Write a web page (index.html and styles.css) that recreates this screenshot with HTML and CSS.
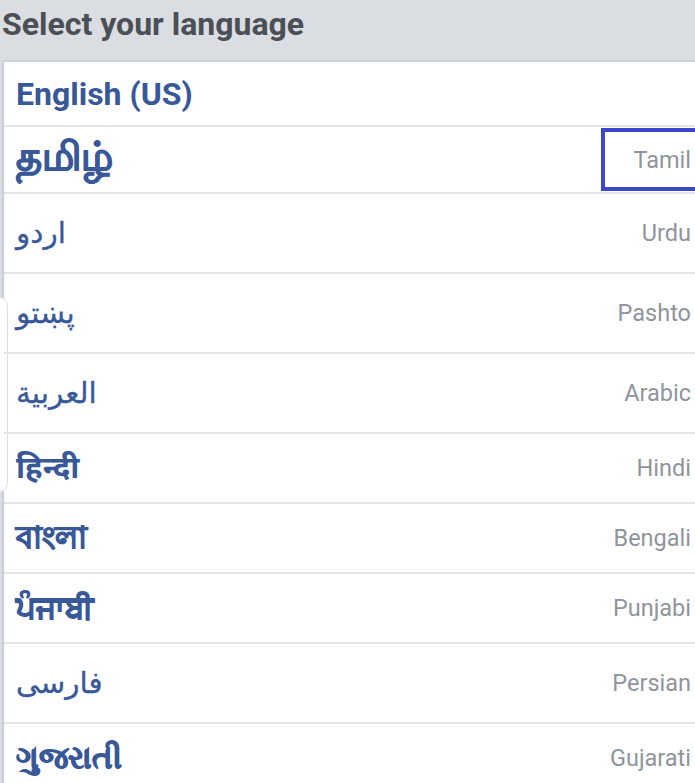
FILE: index.html
```html
<!DOCTYPE html>
<html lang="en">
<head>
<meta charset="utf-8">
<title>Select your language</title>
<link rel="stylesheet" href="styles.css">
</head>
<body>
<div class="page">
  <header class="header">Select your language</header>
  <div class="panel">
    <div class="handle"></div>
    <ul class="list">
      <li class="row row-en"><span class="native bold">English (US)</span></li>
      <li class="row row-ta focused"><span class="native bold stroke tamil">தமிழ்</span><span class="label">Tamil</span></li>
      <li class="row row-ar"><span class="native arabic" dir="rtl">اردو</span><span class="label">Urdu</span></li>
      <li class="row row-ar"><span class="native arabic" dir="rtl">پښتو</span><span class="label">Pashto</span></li>
      <li class="row row-ar"><span class="native arabic" dir="rtl">العربية</span><span class="label">Arabic</span></li>
      <li class="row row-in"><span class="native bold indic">हिन्दी</span><span class="label">Hindi</span></li>
      <li class="row row-in"><span class="native bold stroke indic">বাংলা</span><span class="label">Bengali</span></li>
      <li class="row row-in"><span class="native bold stroke indic">ਪੰਜਾਬੀ</span><span class="label">Punjabi</span></li>
      <li class="row row-ar"><span class="native arabic" dir="rtl">فارسی</span><span class="label">Persian</span></li>
      <li class="row row-in"><span class="native bold stroke indic">ગુજરાતી</span><span class="label">Gujarati</span></li>
    </ul>
  </div>
</div>
</body>
</html>
```
FILE: styles.css
```css
html, body {
  margin: 0;
  padding: 0;
}
body {
  background: #dadde1;
  font-family: Roboto, "Noto Sans", "DejaVu Sans", sans-serif;
  overflow: hidden;
}
.page {
  width: 695px;
  height: 783px;
  overflow: hidden;
}
.header {
  height: 60px;
  box-sizing: border-box;
  padding: 8px 0 0 2px;
  font-size: 32px;
  line-height: 32px;
  font-weight: 700;
  color: #4b4f56;
  background: #dadde1;
}
.panel {
  position: relative;
  margin-left: 2px;
  margin-right: -20px;
  background: #fff;
  border-top: 2px solid #ccd0d5;
  border-left: 2px solid #ccd0d5;
  min-height: 800px;
}
.handle {
  position: absolute;
  left: -14px;
  top: 235px;
  width: 18px;
  height: 195px;
  box-sizing: border-box;
  border: 1px solid #dfe1e5;
  border-radius: 10px;
  background: #fff;
}
.list {
  list-style: none;
  margin: 0;
  padding: 0;
}
.row {
  display: flex;
  align-items: center;
  justify-content: space-between;
  box-sizing: border-box;
  border-bottom: 2px solid #e5e6e9;
  padding: 0 24px 0 12px;
  position: relative;
}
.row-en { height: 65px; }
.row-ta { height: 67px; }
.row-ar { height: 80px; }
.row-in { height: 70px; }
.native {
  color: #385898;
  font-size: 32px;
  line-height: 36px;
}
.native.bold { font-weight: 700; }
.native.stroke { -webkit-text-stroke: 0.9px #385898; }
.native.tamil { font-size: 39.5px; margin-top: -6px; }
.native.arabic { font-size: 29.5px; font-weight: 400; -webkit-text-stroke: 0.3px #385898; }
.native.indic { font-size: 31px; }
.label {
  color: #90949c;
  font-size: 23.5px;
  line-height: 28px;
}
.focused::after {
  content: "";
  position: absolute;
  left: 597px;
  right: 0;
  top: 1px;
  bottom: 1px;
  border: 4px solid #3d47cb;
  pointer-events: none;
}
```
